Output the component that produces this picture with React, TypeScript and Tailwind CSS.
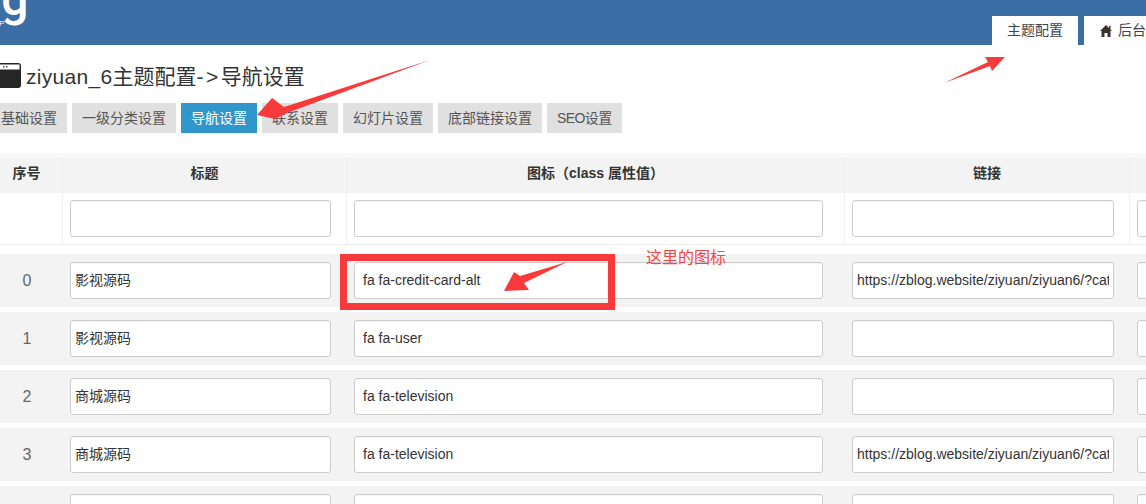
const font = 'font-["Liberation_Sans","Noto_Sans_CJK_SC",sans-serif]'

const tabs = ['基础设置', '一级分类设置', '导航设置', '联系设置', '幻灯片设置', '底部链接设置', 'SEO设置']

const rows = [
  { no: '0', title: '影视源码', icon: 'fa fa-credit-card-alt', link: 'https://zblog.website/ziyuan/ziyuan6/?cat=1' },
  { no: '1', title: '影视源码', icon: 'fa fa-user', link: '' },
  { no: '2', title: '商城源码', icon: 'fa fa-television', link: '' },
  { no: '3', title: '商城源码', icon: 'fa fa-television', link: 'https://zblog.website/ziyuan/ziyuan6/?cat=2' },
  { no: '', title: '', icon: '', link: '' },
]

const cols = 'grid grid-cols-[72px_284px_498px_285px_200px]'
const inputBase =
  'h-[37px] rounded-[3px] border border-[#ccc] bg-white text-[14px] text-[#333] outline-none shadow-[inset_0_1px_1px_rgba(0,0,0,0.03)]'

function Cells({ title, icon, link, cell }: { title: string; icon: string; link: string; cell: string }) {
  return (
    <>
      <div className={`pl-[7px] ${cell}`}>
        <input readOnly value={title} className={`${inputBase} w-[261px] pb-[3px] pl-1 ${font}`} />
      </div>
      <div className={`pl-[7px] ${cell}`}>
        <input readOnly value={icon} className={`${inputBase} w-[469px] pb-[1px] pl-2 ${font}`} />
      </div>
      <div className={`pl-[7px] ${cell}`}>
        <input readOnly value={link} className={`${inputBase} w-[262px] px-1 pb-[1px] ${font}`} />
      </div>
      <div className={`pl-[7px] ${cell}`}>
        <input readOnly className={`${inputBase} w-[180px] px-1 ${font}`} />
      </div>
    </>
  )
}

export default function App() {
  return (
    <div className={`relative h-[504px] w-[1146px] overflow-hidden bg-white ${font}`}>
      <header className="flex h-[45px] overflow-hidden bg-[#3a6ea5]">
        <div className="relative h-[45px] w-[60px] shrink-0">
          <span className="absolute -left-[26px] -top-[31px] font-['Roboto'] text-[48px] font-medium leading-[60px] text-white">
            og
          </span>
          <span className="absolute -left-[1px] top-[19px] text-[8px] leading-[10px] text-white">P</span>
        </div>
        <nav className="-mr-[44px] ml-auto flex shrink-0 items-end gap-[6px]">
          <a className="flex h-[29px] items-center bg-white px-[15px] text-[14px] text-[#444]">主题配置</a>
          <a className="flex h-[29px] items-center gap-[6px] bg-white pl-[16px] pr-[16px] text-[14px] text-[#444]">
            <svg width="12" height="12" viewBox="0 0 12 12" className="shrink-0">
              <path d="M6 0 L9 3 V1 H10.5 V4.5 L12 6 H10.5 V12 H7.5 V8 H4.5 V12 H1.5 V6 H0 Z" fill="#3a3228" />
            </svg>
            后台首页
          </a>
        </nav>
      </header>

      <div className="-ml-[9px] w-[1300px]">
        <h1 className="flex h-[58px] items-start gap-[5px] pl-[6px] pt-[18px] text-[21px] leading-[28px] text-[#333]">
          <svg width="24" height="25" viewBox="0 0 24 25" className="shrink-0">
            <rect x="0" y="0" width="24" height="25" rx="3" fill="#262626" />
            <rect x="1.5" y="1.5" width="21" height="5" fill="#fff" />
            <rect x="6" y="3" width="1.5" height="1.5" fill="#555" />
            <rect x="9" y="3" width="1.5" height="1.5" fill="#555" />
          </svg>
          <span>
            <span className="tracking-[0.3px]">ziyuan_6</span>主题配置<span className="tracking-[2.5px]">-&gt;</span>导航设置
          </span>
        </h1>

        <div className="flex gap-[5px]">
          {tabs.map((tab) => (
            <button
              key={tab}
              type="button"
              className={
                tab === '导航设置'
                  ? 'h-[30px] bg-[#3097cc] px-[10px] text-[14px] text-white'
                  : tab === 'SEO设置'
                    ? 'h-[30px] bg-[#e0e0e0] px-[10px] text-[14px] tracking-[-0.6px] text-[#555]'
                    : 'h-[30px] bg-[#e0e0e0] px-[10px] text-[14px] text-[#555]'
              }
            >
              {tab}
            </button>
          ))}
        </div>

        <div className="mt-[20px]">
          <div
            className={`${cols} h-[40px] border-t-[5px] border-[#f8f8f8] bg-[#f3f3f3] text-[14px] font-bold leading-[30px] text-[#333]`}
          >
            <div className="border-r border-[#eee] text-center">序号</div>
            <div className="border-r border-[#eee] text-center">标题</div>
            <div className="border-r border-[#eee] text-center">图标（class 属性值）</div>
            <div className="border-r border-[#eee] text-center">链接</div>
            <div />
          </div>
          <div className={`${cols} h-[52px] border-b border-[#eee]`}>
            <div className="h-[51px] border-r border-[#f0f0f0]" />
            <Cells title="" icon="" link="" cell="h-[51px] border-r border-[#f0f0f0] pt-[7px]" />
          </div>
          <div className="mt-[9px] flex flex-col gap-[5px]">
            {rows.map((row, i) => (
              <div key={i} className={`${cols} h-[53px] items-center bg-[#f3f3f3]`}>
                <div className="text-center text-[16px] text-[#666]">{row.no}</div>
                <Cells title={row.title} icon={row.icon} link={row.link} cell="" />
              </div>
            ))}
          </div>
        </div>
      </div>

      {/* annotations pasted over the screenshot */}
      <div className="absolute left-[340px] top-[254px] h-[56px] w-[275px] border-[7px] border-[#f83a3a]" />
      <span className="absolute left-[646px] top-[249px] text-[16px] leading-[18px] text-[#f04848]">这里的图标</span>
      <svg width="1146" height="504" className="pointer-events-none absolute left-0 top-0">
        <polygon points="430,60 284,107 272,98 257,115 275,119 287,113" fill="#f83a3a" />
        <polygon points="944,83 988,62 985,57 1005,57 992,71 990,66" fill="#f83a3a" />
        <polygon points="567,262 520,276 514,272 504,291 529,290 524,283" fill="#f83a3a" />
      </svg>
    </div>
  )
}
